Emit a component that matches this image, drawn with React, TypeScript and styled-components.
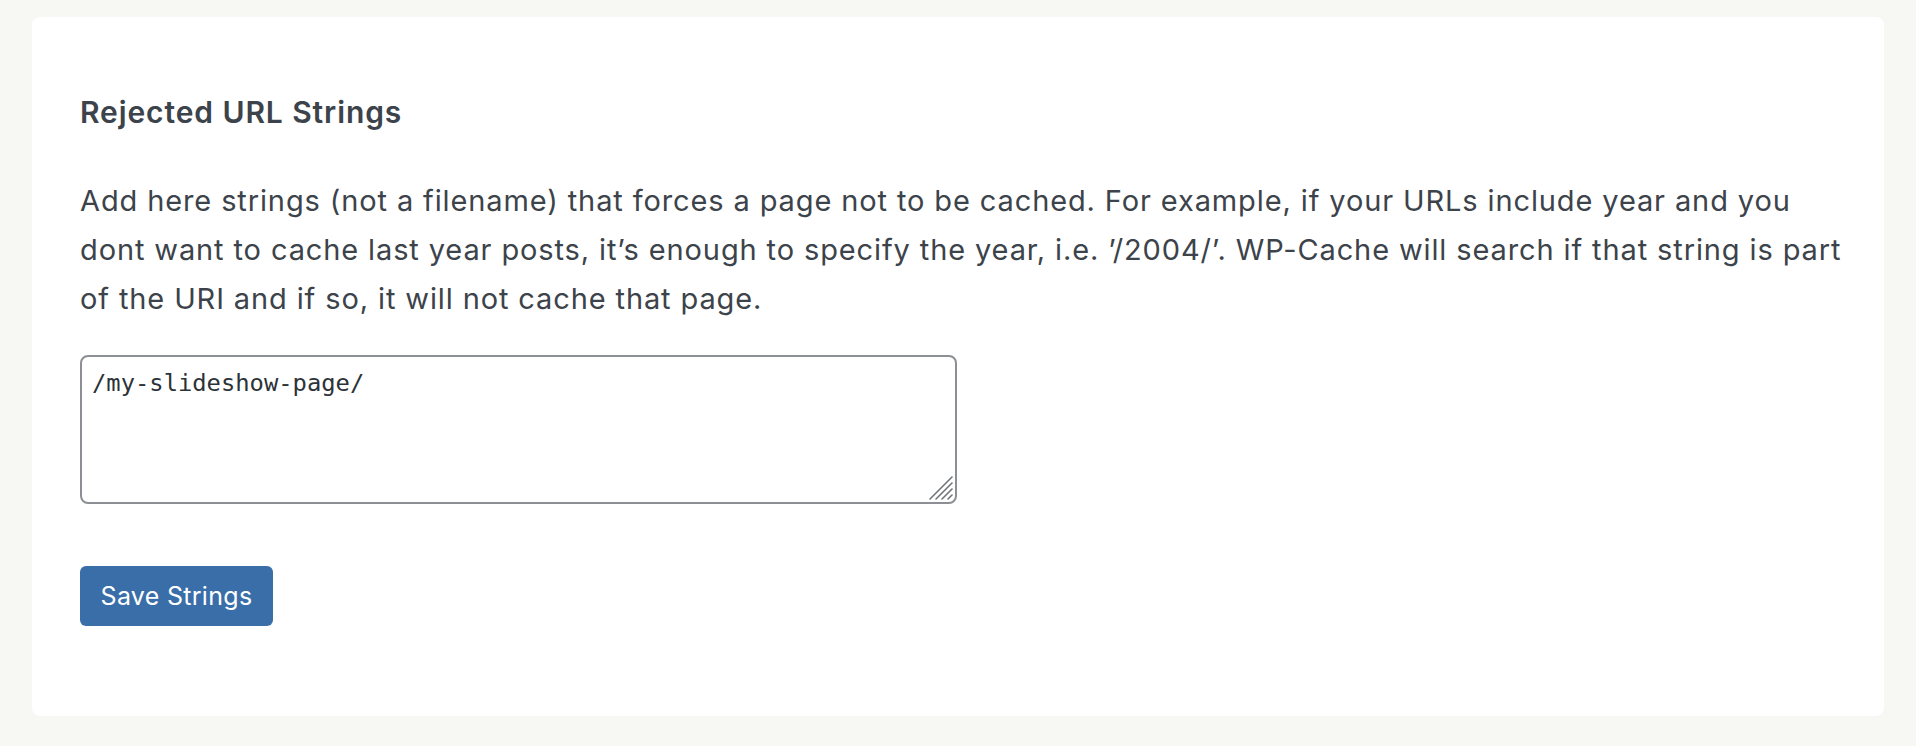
import React from "react";
import styled, { createGlobalStyle } from "styled-components";

const Global = createGlobalStyle`
  html, body {
    margin: 0;
    padding: 0;
    background: #f7f8f3;
  }
  body {
    font-family: Inter, "Noto Sans", "Liberation Sans", sans-serif;
    color: #3c434a;
  }
`;

const Page = styled.div`
  padding: 17px 32px 30px 32px;
`;

const Card = styled.section`
  background: #ffffff;
  border-radius: 8px;
  height: 699px;
  box-sizing: border-box;
  padding: 77px 28px 90px 48px;
  display: flex;
  flex-direction: column;
  align-items: flex-start;
`;

const Heading = styled.h2`
  margin: 0;
  font-size: 30px;
  line-height: 36px;
  font-weight: 600;
  letter-spacing: 0.9px;
  color: #3c434a;
`;

const Description = styled.p`
  margin: 46px 0 0 0;
  font-size: 29px;
  line-height: 49px;
  font-weight: 400;
  letter-spacing: 0.88px;
  color: #3c434a;
`;

const FieldWrap = styled.div`
  position: relative;
  margin-top: 32px;
  width: 877px;
  height: 149px;
`;

const TextArea = styled.textarea`
  display: block;
  width: 100%;
  height: 100%;
  box-sizing: border-box;
  border: 2px solid #8c8f94;
  border-radius: 8px;
  padding: 10px 10px;
  font-family: "DejaVu Sans Mono", "Liberation Mono", monospace;
  font-size: 23.8px;
  line-height: 32px;
  color: #2c3338;
  background: #fff;
  resize: none;
  outline: none;
`;

const ResizeGrip = styled.svg`
  position: absolute;
  right: 3px;
  bottom: 3px;
  width: 28px;
  height: 28px;
  pointer-events: none;
`;

const Button = styled.button`
  margin-top: 62px;
  width: 193px;
  height: 60px;
  border: none;
  border-radius: 6px;
  background: #3a6ea9;
  color: #ffffff;
  font-family: Inter, "Noto Sans", "Liberation Sans", sans-serif;
  font-size: 25px;
  font-weight: 400;
  letter-spacing: 0.3px;
  cursor: pointer;
  padding: 0;
`;

export default function App() {
  return (
    <>
      <Global />
      <Page>
        <Card>
          <Heading>Rejected URL Strings</Heading>
          <Description>
            Add here strings (not a filename) that forces a page not to be cached. For example, if your URLs include year and you dont want to cache last year posts, it’s enough to specify the year, i.e. ’/2004/’. WP-Cache will search if that string is part of the URI and if so, it will not cache that page.
          </Description>
          <FieldWrap>
            <TextArea defaultValue="/my-slideshow-page/" />
            <ResizeGrip viewBox="0 0 28 28">
              <g stroke="#6f7377" strokeWidth="1.6" strokeLinecap="round">
                <line x1="26" y1="4" x2="4" y2="26" />
                <line x1="26" y1="10" x2="10" y2="26" />
                <line x1="26" y1="16" x2="16" y2="26" />
                <line x1="26" y1="22" x2="22" y2="26" />
              </g>
            </ResizeGrip>
          </FieldWrap>
          <Button type="button">Save Strings</Button>
        </Card>
      </Page>
    </>
  );
}
